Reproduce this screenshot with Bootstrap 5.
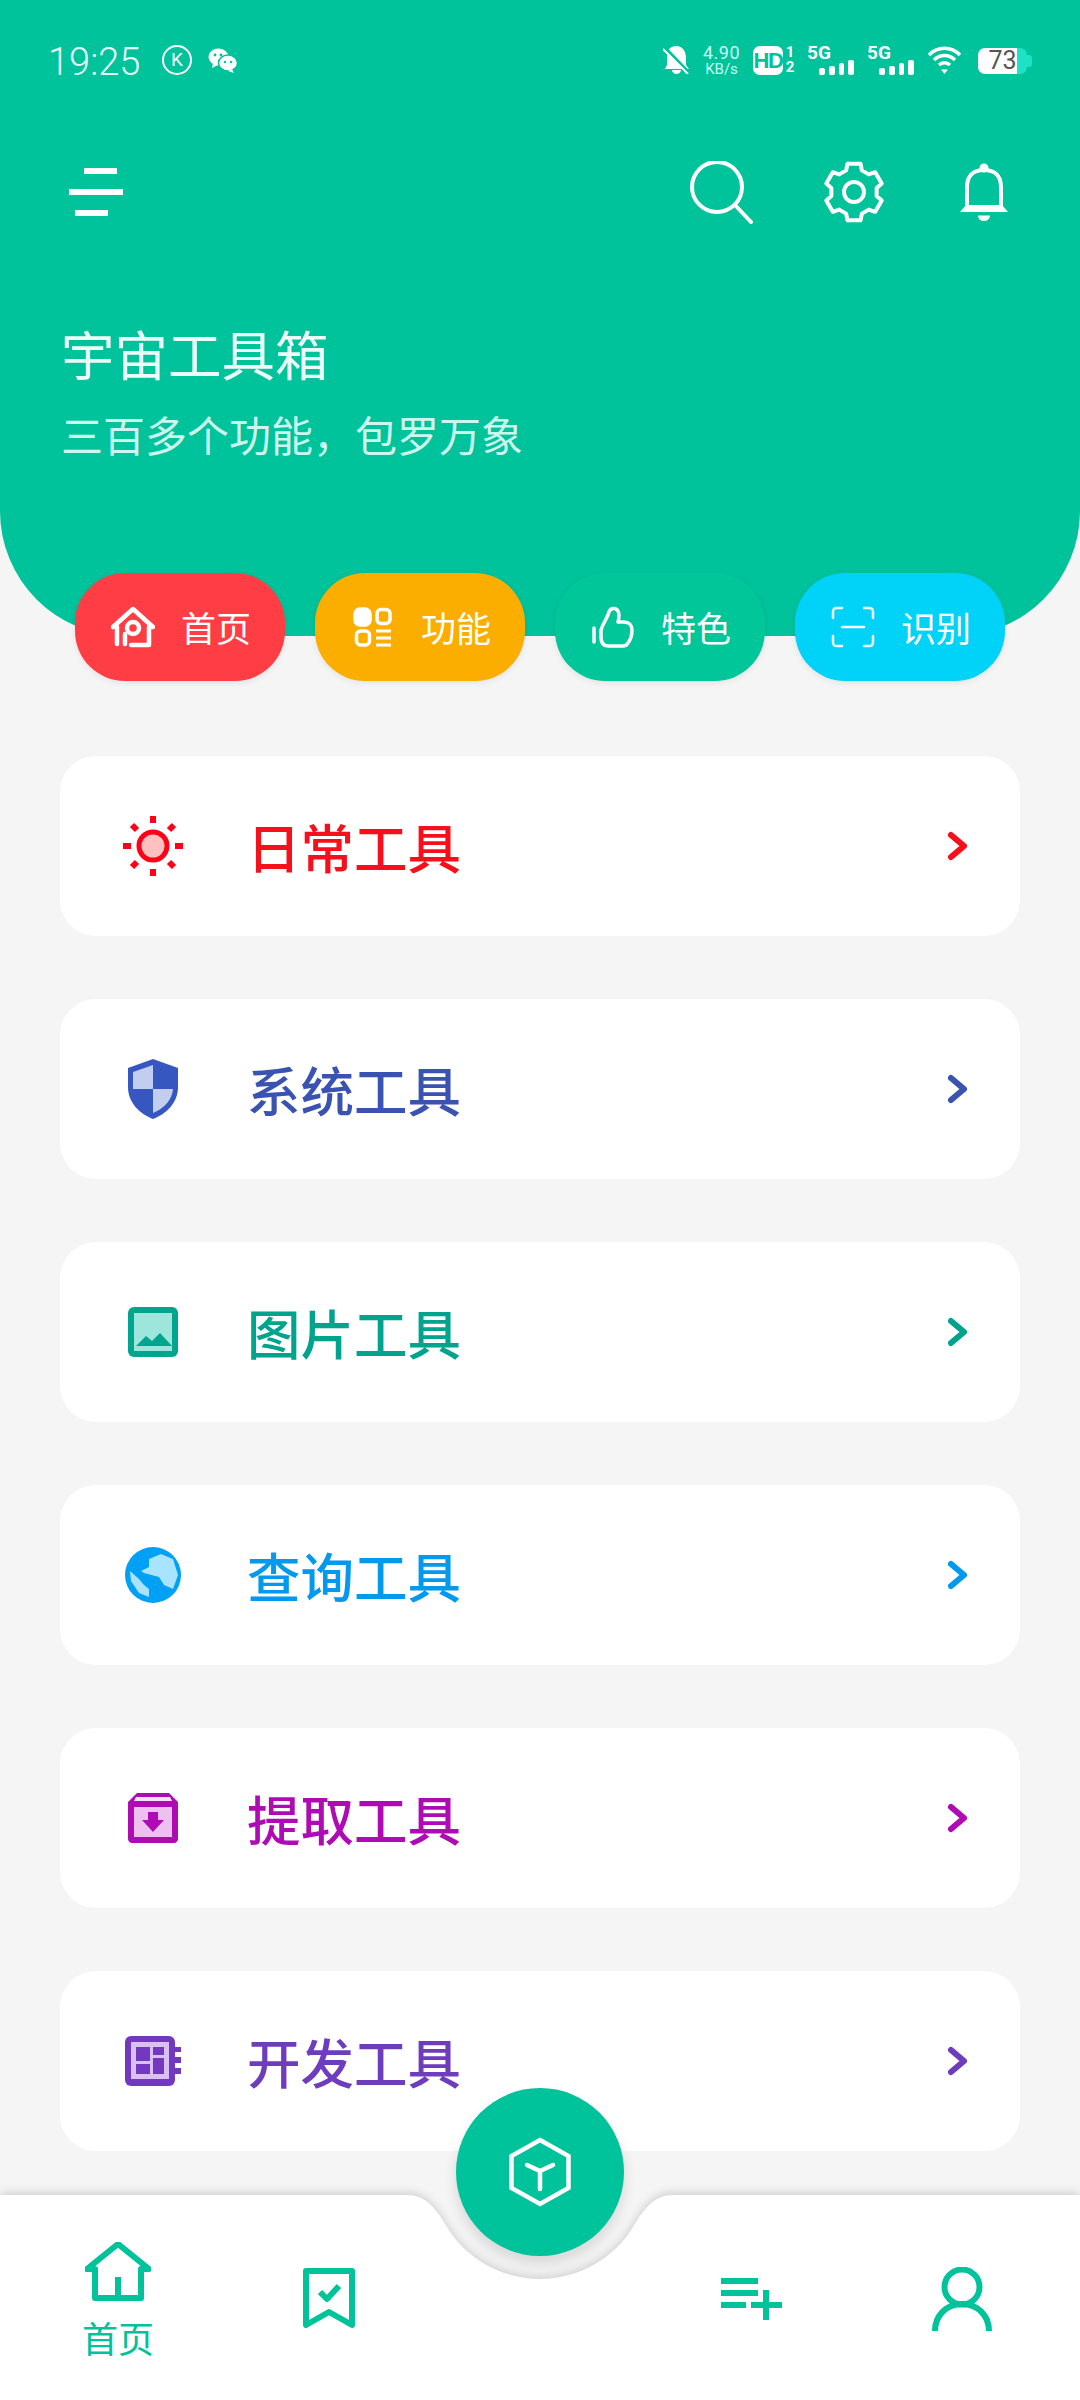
<!DOCTYPE html>
<html lang="zh-CN">
<head>
    <meta charset="UTF-8">
    <meta name="viewport" content="width=device-width, initial-scale=1.0">
    <title>宇宙工具箱</title>
    <link href="https://cdn.jsdelivr.net/npm/bootstrap@5.3.0/dist/css/bootstrap.min.css" rel="stylesheet">
    <style>
        body {
            background-color: #f5f5f5;
            font-family: "Noto Sans CJK SC", "Liberation Sans", sans-serif;
        }

        svg { display: block; flex: none; }

        .app-shell { width: 1080px; height: 2400px; }

        /* green header */
        .hero-head {
            height: 636px;
            padding-top: 45px;
            background-color: #00c29b;
            border-radius: 0 0 125px 125px;
            color: #fff;
        }

        .status-row { height: 30px; padding: 0 48px; color: #fff; }
        .status-time { font: 300 38px/30px Roboto, sans-serif; width: 114px; margin-top: 3px; color: #e6fffa; }
        .status-k {
            width: 30px; height: 30px; margin-right: 16px;
            border: 2px solid #fff; border-radius: 50%;
            font: 400 19px/26px Roboto, sans-serif; text-align: center;
        }
        .net-speed { width: 39px; margin: 0 12px; font-family: Roboto, sans-serif; color: #c9fff3; text-align: center; white-space: nowrap; }
        .net-speed div:first-child { font-size: 18px; line-height: 16px; letter-spacing: .5px; margin-bottom: 2px; }
        .net-speed div:last-child { font-size: 15px; line-height: 12px; }
        .hd-box {
            width: 30px; height: 29px; border-radius: 7px; background-color: #fff; color: #00c29b;
            font: 900 22px/29px "Liberation Sans", sans-serif; text-align: center; letter-spacing: -1.5px;
        }
        .hd-nums { width: 10px; margin: 0 12px 0 2px; font: 700 15px/15px Roboto, sans-serif; text-align: center; }
        .sig-block { width: 47px; margin-right: 13px; }
        .sig-label { font: 700 19px/14px Roboto, sans-serif; }
        .sig-bars { gap: 4px; height: 15px; margin-left: 12px; }
        .sig-bars i { display: block; width: 6px; background-color: #fff; border-radius: 2px; }
        .batt-box {
            position: relative; width: 49px; height: 26px; margin: 2px 5px 0 16px;
            border-radius: 7px; background: linear-gradient(90deg, #fff 80%, #1de2c4 80%);
            color: #555; font: 400 25px/26px Roboto, sans-serif; text-align: center;
        }
        .batt-box::after {
            content: ""; position: absolute; left: 49px; top: 7px; width: 5px; height: 12px;
            background-color: #1de2c4; border-radius: 0 3px 3px 0;
        }

        .action-row { margin-top: 86px; height: 62px; padding: 0 72px 0 69px; }
        .action-icons { gap: 70px; }
        .bell-gap { margin-left: 5px; }
        .hero-title { margin: 100px 0 0 61px; font-size: 53.5px; line-height: 60px; color: #ecfdf8; }
        .hero-sub { margin: 26px 0 0 61px; font-size: 42px; line-height: 50px; color: #cdf6ec; }

        /* the four pills that sit on the edge of the header */
        .pill-row { margin-top: -63px; padding-left: 75px; gap: 30px; }
        .pill-btn {
            width: 210px; height: 108px; padding-left: 36px; gap: 26px;
            border-radius: 50px; color: #fff; font-size: 35px; line-height: 1;
            box-shadow: 0 2px 6px rgba(0, 0, 0, .08);
        }
        .pill-btn span { margin-top: -2px; }
        .pill-icon { width: 44px; height: 42px; }
        .pill-red { background-color: #ff3d44; }
        .pill-amber { background-color: #fbae00; }
        .pill-green { background-color: #00c69a; }
        .pill-cyan { background-color: #00d2f8; }

        /* tool list */
        .tool-list { margin-top: 75px; padding: 0 60px; gap: 63px; }
        .tool-card {
            height: 180px; padding: 0 52px 0 63px; border: 0; border-radius: 36px;
            font-size: 53.5px; font-weight: 500; line-height: 1;
        }
        .tool-icon { width: 60px; height: 60px; margin-right: 64px; }
        .tone-red { color: #f5101c; }
        .tone-blue { color: #3a53b0; }
        .tone-teal { color: #00a38c; }
        .tone-sky { color: #0399ec; }
        .tone-magenta { color: #ae0bb4; }
        .tone-purple { color: #6e3dbb; }

        /* bottom bar with the notch */
        .tab-bar { position: relative; height: 205px; padding: 47px 58px 0; color: #00c29b; }
        .tab-shape { position: absolute; left: 0; top: 0; filter: drop-shadow(0 -2px 5px rgba(0, 0, 0, .16)); }
        .tab-group { position: relative; width: 331px; height: 113px; }
        .tab-item { width: 120px; }
        .tab-text { margin-top: 18px; font-size: 36px; line-height: 36px; }
        .fab-btn {
            position: absolute; left: 456px; top: -107px; width: 168px; height: 168px;
            border-radius: 50%; background-color: #00c29b;
            box-shadow: 0 8px 14px rgba(0, 0, 0, .12);
        }
    </style>
</head>
<body>
    <div class="app-shell d-flex flex-column">
        <div class="hero-head">
            <div class="status-row d-flex align-items-center">
                <div class="status-time">19:25</div>
                <div class="status-k">K</div>
                <svg width="30" height="26" viewBox="0 0 30 26" fill="#fff">
                    <ellipse cx="10.5" cy="10" rx="10" ry="8.5"/>
                    <path d="M5 16l-1 5 6-3z"/>
                    <ellipse cx="20" cy="16" rx="9.5" ry="8" stroke="#00c29b" stroke-width="1.5"/>
                    <path d="M24 22l2 4-6-2z"/>
                    <circle cx="7" cy="8" r="1.4" fill="#00c29b"/>
                    <circle cx="13" cy="8" r="1.4" fill="#00c29b"/>
                    <circle cx="17" cy="15" r="1.2" fill="#00c29b"/>
                    <circle cx="23" cy="15" r="1.2" fill="#00c29b"/>
                </svg>
                <div class="ms-auto"></div>
                <svg width="27" height="28" viewBox="0 0 27 28">
                    <path d="M13 0C20 0 23 6 23 12V19L26 23H2L4 19V9C4 4 8 0 13 0Z" fill="#fff"/>
                    <path d="M9 24h9a4.500 4 0 0 1-9 0z" fill="#fff"/>
                    <path d="M1 1L26 27" stroke="#00c29b" stroke-width="3.500"/>
                    <path d="M0 3L25 28" stroke="#fff" stroke-width="2"/>
                </svg>
                <div class="net-speed">
                    <div>4.90</div>
                    <div>KB/s</div>
                </div>
                <div class="hd-box">HD</div>
                <div class="hd-nums">
                    <div>1</div>
                    <div>2</div>
                </div>
                <div class="sig-block">
                    <div class="sig-label">5G</div>
                    <div class="sig-bars d-flex align-items-end"><i style="height:7px"></i><i style="height:9px"></i><i style="height:12px"></i><i style="height:15px"></i></div>
                </div>
                <div class="sig-block">
                    <div class="sig-label">5G</div>
                    <div class="sig-bars d-flex align-items-end"><i style="height:7px"></i><i style="height:9px"></i><i style="height:12px"></i><i style="height:15px"></i></div>
                </div>
                <svg width="35" height="28" viewBox="0 0 35 28" fill="none" stroke="#fff" stroke-width="3.500">
                    <path d="M2 9C11 0 24 0 33 9"/>
                    <path d="M7 14C13 8 22 8 28 14"/>
                    <path d="M12 19C15 16 20 16 23 19"/>
                    <path d="M14 23.500h7L17.500 28z" fill="#fff" stroke="none"/>
                </svg>
                <div class="batt-box">73</div>
            </div>

            <div class="action-row d-flex align-items-center justify-content-between">
                <svg width="54" height="48" viewBox="0 0 54 48" fill="#fff">
                    <rect x="15" y="0" width="33" height="6"/>
                    <rect x="0" y="21" width="54" height="6"/>
                    <rect x="6" y="42" width="33" height="6"/>
                </svg>
                <div class="action-icons d-flex align-items-center">
                    <svg width="63" height="63" viewBox="0 0 63 63" fill="none" stroke="#fff" stroke-width="4" stroke-linecap="round">
                        <circle cx="27" cy="26" r="25"/>
                        <path d="M45 44L61 61"/>
                    </svg>
                    <svg width="62" height="62" viewBox="0 0 62 62" fill="none" stroke="#fff" stroke-width="4" stroke-linejoin="round">
                        <polygon points="23.13,9.39 24.48,2.74 37.52,2.74 38.87,9.39 45.78,13.38 52.21,11.22 58.73,22.52 53.65,27.01 53.65,34.99 58.73,39.48 52.21,50.78 45.78,48.62 38.87,52.61 37.52,59.26 24.48,59.26 23.13,52.61 16.22,48.62 9.79,50.78 3.27,39.48 8.35,34.99 8.35,27.01 3.27,22.52 9.79,11.22 16.22,13.38"/>
                        <circle cx="31" cy="31" r="10"/>
                    </svg>
                    <svg class="bell-gap" width="48" height="58" viewBox="0 0 48 58">
                        <circle cx="24" cy="5" r="4.500" fill="#fff"/>
                        <path d="M7 46V24C7 12 14 7 24 7S41 12 41 24V46" fill="none" stroke="#fff" stroke-width="4"/>
                        <path d="M0 49L6 42H42L48 49Z" fill="#fff"/>
                        <path d="M18 52.500H30A6 5.500 0 0 1 18 52.500Z" fill="#fff"/>
                    </svg>
                </div>
            </div>

            <div class="hero-title">宇宙工具箱</div>
            <div class="hero-sub">三百多个功能，包罗万象</div>
        </div>

        <div class="pill-row d-flex">
            <div class="pill-btn pill-red d-flex align-items-center">
                <svg class="pill-icon" viewBox="0 0 44 42" fill="none" stroke="#fff" stroke-width="4.500" stroke-linecap="round" stroke-linejoin="round">
                    <path d="M2 21L22 3L42 21H38V39H20"/>
                    <path d="M6 21V38"/>
                    <circle cx="22" cy="22" r="6"/>
                    <path d="M14 38V28"/>
                </svg>
                <span>首页</span>
            </div>
            <div class="pill-btn pill-amber d-flex align-items-center">
                <svg class="pill-icon" viewBox="0 0 44 42" fill="none" stroke="#fff" stroke-width="3.500">
                    <rect x="4" y="3" width="15" height="16" rx="5" fill="#fff"/>
                    <rect x="26" y="3.500" width="13" height="14" rx="4"/>
                    <rect x="5.500" y="25" width="13" height="14" rx="4"/>
                    <path d="M25 25H40M25 32H40M25 39H40" stroke-width="3"/>
                </svg>
                <span>功能</span>
            </div>
            <div class="pill-btn pill-green d-flex align-items-center">
                <svg class="pill-icon" viewBox="0 0 44 42" fill="none" stroke="#fff" stroke-width="3.500" stroke-linecap="round" stroke-linejoin="round">
                    <path d="M3 22V36"/>
                    <path d="M10 24C12 17 16 13 18 6C19 2 25 1 27 5C29 9 28 12 27 16H33C38 16 41 19 41 24C41 29 40 33 37 37C36 39 34 40 32 40H17C12 40 10 36 10 31Z"/>
                </svg>
                <span>特色</span>
            </div>
            <div class="pill-btn pill-cyan d-flex align-items-center">
                <svg class="pill-icon" viewBox="0 0 44 42" fill="none" stroke="#f0fffd" stroke-width="2.500" stroke-linecap="round" stroke-linejoin="round">
                    <path d="M11 2H6C3 2 2 3 2 6V12"/>
                    <path d="M33 2H38C41 2 42 3 42 6V12"/>
                    <path d="M2 30V36C2 39 3 40 6 40H11"/>
                    <path d="M42 30V36C42 39 41 40 38 40H33"/>
                    <path d="M11 21H33"/>
                </svg>
                <span>识别</span>
            </div>
        </div>

        <div class="tool-list d-flex flex-column">
            <div class="card tool-card tone-red flex-row align-items-center">
                <svg class="tool-icon" viewBox="0 0 60 60">
                    <circle cx="30" cy="30" r="14" fill="#ffc0c0" stroke="#ff0018" stroke-width="5"/>
                    <path d="M30 0V7M30 53V60M0 30H8M52 30H60M9 9L14 14M46 46L51 51M9 51L14 46M46 14L51 9" stroke="#ff0018" stroke-width="6"/>
                </svg>
                <span>日常工具</span>
                <svg class="ms-auto" width="21" height="30" viewBox="0 0 21 30" fill="none" stroke="#f5101c" stroke-width="6" stroke-linecap="round" stroke-linejoin="round"><path d="M4 4L17 15L4 26"/></svg>
            </div>
            <div class="card tool-card tone-blue flex-row align-items-center">
                <svg class="tool-icon" viewBox="0 0 60 60">
                    <path d="M30 0L55 9V28C55 44 43 55 30 60C17 55 5 44 5 28V9Z" fill="#3757c0"/>
                    <path d="M30 6L10 13V30H30Z M30 30H50C49 42 40 50 30 54Z" fill="#c2cdf0"/>
                </svg>
                <span>系统工具</span>
                <svg class="ms-auto" width="21" height="30" viewBox="0 0 21 30" fill="none" stroke="#3a53b0" stroke-width="6" stroke-linecap="round" stroke-linejoin="round"><path d="M4 4L17 15L4 26"/></svg>
            </div>
            <div class="card tool-card tone-teal flex-row align-items-center">
                <svg class="tool-icon" viewBox="0 0 60 60">
                    <rect x="5" y="5" width="50" height="50" rx="6" fill="#00a58e"/>
                    <rect x="11" y="11" width="38" height="38" fill="#9ee6dc"/>
                    <path d="M13 44L23 34L29 39L37 31L49 44Z" fill="#00a58e"/>
                </svg>
                <span>图片工具</span>
                <svg class="ms-auto" width="21" height="30" viewBox="0 0 21 30" fill="none" stroke="#00a38c" stroke-width="6" stroke-linecap="round" stroke-linejoin="round"><path d="M4 4L17 15L4 26"/></svg>
            </div>
            <div class="card tool-card tone-sky flex-row align-items-center">
                <svg class="tool-icon" viewBox="0 0 60 60">
                    <circle cx="30" cy="30" r="28" fill="#00a0f5"/>
                    <path d="M18 26L26 22V14L38 9L50 14L55 30L50 44L41 40L36 32L21 28Z" fill="#a8e4ff"/>
                    <path d="M7 26L16 34L21 40L26 44V52L16 48L8 36Z" fill="#a8e4ff"/>
                </svg>
                <span>查询工具</span>
                <svg class="ms-auto" width="21" height="30" viewBox="0 0 21 30" fill="none" stroke="#0399ec" stroke-width="6" stroke-linecap="round" stroke-linejoin="round"><path d="M4 4L17 15L4 26"/></svg>
            </div>
            <div class="card tool-card tone-magenta flex-row align-items-center">
                <svg class="tool-icon" viewBox="0 0 60 60">
                    <path d="M14 5H46L55 14V51C55 53 53 55 51 55H9C7 55 5 53 5 51V14Z" fill="#ae0bb4"/>
                    <rect x="11" y="19" width="38" height="30" fill="#eec0f0"/>
                    <path d="M13 9H47L49 13H11Z" fill="#f7e3f8"/>
                    <path d="M25 24H35V32H41L30 44L19 32H25Z" fill="#ae0bb4"/>
                </svg>
                <span>提取工具</span>
                <svg class="ms-auto" width="21" height="30" viewBox="0 0 21 30" fill="none" stroke="#ae0bb4" stroke-width="6" stroke-linecap="round" stroke-linejoin="round"><path d="M4 4L17 15L4 26"/></svg>
            </div>
            <div class="card tool-card tone-purple flex-row align-items-center">
                <svg class="tool-icon" viewBox="0 0 60 60">
                    <rect x="2" y="5" width="50" height="50" rx="6" fill="#7338c0"/>
                    <rect x="8" y="11" width="38" height="37" fill="#d8c0f4"/>
                    <path d="M13 16H27V30H13Z M30 16H41V24H30Z M30 27H41V43H30Z M13 33H27V43H13Z" fill="#7338c0"/>
                    <path d="M52 16H58V21H52Z M52 26H58V32H52Z M52 37H58V43H52Z" fill="#7338c0"/>
                </svg>
                <span>开发工具</span>
                <svg class="ms-auto" width="21" height="30" viewBox="0 0 21 30" fill="none" stroke="#6e3dbb" stroke-width="6" stroke-linecap="round" stroke-linejoin="round"><path d="M4 4L17 15L4 26"/></svg>
            </div>
        </div>

        <div class="tab-bar mt-auto d-flex justify-content-between">
            <svg class="tab-shape" width="1080" height="205" viewBox="0 0 1080 205">
                <path d="M0 0H407C425 0 435 12 447 32C465 62 500 84 540 84C580 84 615 62 633 32C645 12 655 0 673 0H1080V205H0Z" fill="#fff"/>
            </svg>
            <div class="tab-group d-flex justify-content-between align-items-center">
                <div class="tab-item d-flex flex-column align-items-center">
                    <svg width="66" height="59" viewBox="0 0 66 59" fill="none" stroke="#00c29b" stroke-width="6" stroke-linejoin="round">
                        <path d="M2 27L33 2L64 27H56V56H10V27Z"/>
                        <path d="M33 35V56"/>
                    </svg>
                    <div class="tab-text">首页</div>
                </div>
                <div class="tab-item d-flex justify-content-center">
                    <svg width="52" height="61" viewBox="0 0 52 61" fill="none" stroke="#00c29b" stroke-width="6" stroke-linejoin="round">
                        <path d="M3 3H49V57L26 44L3 57Z"/>
                        <path d="M17 24L24 31L36 18" stroke-width="6"/>
                    </svg>
                </div>
            </div>
            <div class="tab-group d-flex justify-content-between align-items-center">
                <div class="tab-item d-flex justify-content-center">
                    <svg width="61" height="42" viewBox="0 0 61 42" fill="#00c29b">
                        <rect x="0" y="0" width="37" height="6"/>
                        <rect x="0" y="12" width="37" height="6"/>
                        <rect x="0" y="24" width="25" height="6"/>
                        <rect x="30" y="24" width="31" height="6"/>
                        <rect x="42" y="12" width="6" height="30"/>
                    </svg>
                </div>
                <div class="tab-item d-flex justify-content-center">
                    <svg width="60" height="64" viewBox="0 0 60 64" fill="none" stroke="#00c29b" stroke-width="6">
                        <circle cx="30" cy="20" r="17.500"/>
                        <path d="M3 64C3 48 15 37 30 37S57 48 57 64"/>
                    </svg>
                </div>
            </div>
            <div class="fab-btn d-flex align-items-center justify-content-center">
                <svg width="66" height="74" viewBox="0 0 66 74" fill="none" stroke="#fff" stroke-width="4.500">
                    <path d="M33 5L61.500 21V53L33 69L4.500 53V21Z"/>
                    <path d="M20 30L33 36L46 30M33 36V54" stroke-linecap="round"/>
                </svg>
            </div>
        </div>
    </div>

    <script src="https://cdn.jsdelivr.net/npm/bootstrap@5.3.0/dist/js/bootstrap.bundle.min.js"></script>
</body>
</html>
